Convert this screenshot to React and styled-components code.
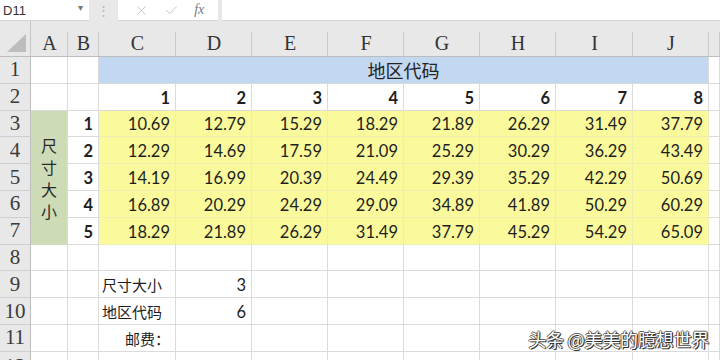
import React from "react";
import styled, { createGlobalStyle } from "styled-components";
import { X, Check } from "lucide-react";

const GlobalStyle = createGlobalStyle`
  * { box-sizing: border-box; }
  html, body { margin: 0; padding: 0; background: #fff; overflow: hidden; }
`;

const columns = ["A", "B", "C", "D", "E", "F", "G", "H", "I", "J", ""];
const regionCodes = [1, 2, 3, 4, 5, 6, 7, 8];
const prices = [
  ["10.69", "12.79", "15.29", "18.29", "21.89", "26.29", "31.49", "37.79"],
  ["12.29", "14.69", "17.59", "21.09", "25.29", "30.29", "36.29", "43.49"],
  ["14.19", "16.99", "20.39", "24.49", "29.39", "35.29", "42.29", "50.69"],
  ["16.89", "20.29", "24.29", "29.09", "34.89", "41.89", "50.29", "60.29"],
  ["18.29", "21.89", "26.29", "31.49", "37.79", "45.29", "54.29", "65.09"],
];

function App() {
  return (
    <Page>
      <GlobalStyle />
      <FormulaBar>
        <NameBox>
          D11
          <Caret>▾</Caret>
        </NameBox>
        <Grip>⋮</Grip>
        <FxBox>
          <X size={15} strokeWidth={1.4} />
          <Check size={15} strokeWidth={1.4} />
          <FxLabel>fx</FxLabel>
        </FxBox>
        <FormulaInput />
      </FormulaBar>

      <Sheet>
        <Corner>
          <CornerTriangle />
        </Corner>
        {columns.map((c, i) => (
          <ColHeader key={i}>{c}</ColHeader>
        ))}

        {/* row 1 */}
        <RowHeader>1</RowHeader>
        <Cell />
        <Cell />
        <Title>地区代码</Title>
        <Cell />

        {/* row 2 */}
        <RowHeader>2</RowHeader>
        <Cell />
        <Cell />
        {regionCodes.map((n) => (
          <Cell key={n} $bold>
            {n}
          </Cell>
        ))}
        <Cell />

        {/* rows 3-7 */}
        {prices.map((row, r) => (
          <React.Fragment key={r}>
            <RowHeader>{r + 3}</RowHeader>
            {r === 0 && (
              <SizeLabel>
                <Stacked>尺寸大小</Stacked>
              </SizeLabel>
            )}
            <Cell $bold>{r + 1}</Cell>
            {row.map((v, i) => (
              <Cell key={i} $fill="#fafa9c" $line="#ededb4">
                {v}
              </Cell>
            ))}
            <Cell />
          </React.Fragment>
        ))}

        {/* row 8 */}
        <RowHeader>8</RowHeader>
        {columns.map((_, i) => (
          <Cell key={i} />
        ))}

        {/* row 9 */}
        <RowHeader>9</RowHeader>
        <Cell />
        <Cell />
        <Cell $align="flex-start" $cjk>尺寸大小</Cell>
        <Cell>3</Cell>
        {columns.slice(4).map((_, i) => (
          <Cell key={i} />
        ))}

        {/* row 10 */}
        <RowHeader>10</RowHeader>
        <Cell />
        <Cell />
        <Cell $align="flex-start" $cjk>地区代码</Cell>
        <Cell>6</Cell>
        {columns.slice(4).map((_, i) => (
          <Cell key={i} />
        ))}

        {/* row 11 */}
        <RowHeader>11</RowHeader>
        <Cell />
        <Cell />
        <Cell $cjk>邮费：</Cell>
        {columns.slice(3).map((_, i) => (
          <Cell key={i} />
        ))}

        {/* row 12, only its top shows */}
        <RowHeader $tall>12</RowHeader>
        {columns.map((_, i) => (
          <Cell key={i} />
        ))}
      </Sheet>

      <Watermark>头条 @美美的臆想世界</Watermark>
    </Page>
  );
}

const Page = styled.div`
  position: relative;
  width: 720px;
  height: 360px;
  overflow: hidden;
  background: #fff;
`;

const FormulaBar = styled.div`
  display: flex;
  height: 21px;
  background: #e8e8e8;
  font-family: "Liberation Sans", Arial, sans-serif;
`;

const NameBox = styled.div`
  width: 89px;
  background: #fff;
  border-bottom: 1px solid #d6d6d6;
  display: flex;
  align-items: center;
  justify-content: space-between;
  padding: 0 6px 0 3px;
  font-size: 13px;
  color: #333;
`;

const Caret = styled.span`
  font-size: 10px;
  color: #777;
  margin-top: -6px;
`;

const Grip = styled.div`
  width: 29px;
  display: flex;
  align-items: center;
  justify-content: center;
  color: #b5b5b5;
  font-size: 13px;
`;

const FxBox = styled.div`
  width: 100px;
  background: #fff;
  border-bottom: 1px solid #d6d6d6;
  display: flex;
  align-items: center;
  justify-content: space-around;
  padding: 0 6px 0 8px;
  color: #bdbdbd;
`;

const FxLabel = styled.span`
  font-family: "Liberation Serif", serif;
  font-style: italic;
  font-size: 14px;
  color: #7a7a7a;
`;

const FormulaInput = styled.div`
  flex: 1;
  margin-left: 4px;
  background: #fff;
  border-bottom: 1px solid #d6d6d6;
`;

const Sheet = styled.div`
  display: grid;
  grid-template-columns: 31px 37px 31px 77px 76px 76px 76px 76px 76px 77px 76px 11px;
  grid-template-rows: 36px repeat(12, 26.8px);
  background: #fff;
`;

const Corner = styled.div`
  background: #e8e8e8;
  border-bottom: 1px solid #bdbdbd;
  border-right: 1px solid #c6c6c6;
  position: relative;
`;

const CornerTriangle = styled.div`
  position: absolute;
  right: 4px;
  bottom: 4px;
  width: 0;
  height: 0;
  border-left: 19px solid transparent;
  border-bottom: 18px solid #bdbdbd;
`;

const ColHeader = styled.div`
  position: relative;
  background: #e8e8e8;
  border-bottom: 1px solid #bdbdbd;
  display: flex;
  align-items: flex-end;
  justify-content: center;
  padding-bottom: 1px;
  font-family: "Liberation Serif", "Times New Roman", serif;
  font-size: 20px;
  color: #333;
  &::after {
    content: "";
    position: absolute;
    right: 0;
    top: 11px;
    bottom: 0;
    width: 1px;
    background: #c9c9c9;
  }
`;

const RowHeader = styled.div`
  background: #e8e8e8;
  border-right: 1px solid #bdbdbd;
  border-bottom: 1px solid #cfcfcf;
  display: flex;
  align-items: ${(p) => (p.$tall ? "flex-start" : "center")};
  justify-content: center;
  padding-top: ${(p) => (p.$tall ? "2px" : "0")};
  font-family: "Liberation Serif", "Times New Roman", serif;
  font-size: 21px;
  color: #3a3a3a;
`;

const Cell = styled.div`
  display: flex;
  align-items: flex-end;
  justify-content: ${(p) => p.$align || "flex-end"};
  padding: 0 5px 2px 3px;
  line-height: 20px;
  background: ${(p) => p.$fill || "#fff"};
  border-right: 1px solid ${(p) => p.$line || "#dadada"};
  border-bottom: 1px solid ${(p) => p.$line || "#dadada"};
  font-family: ${(p) =>
    p.$cjk
      ? '"Noto Sans CJK SC", sans-serif'
      : 'Lato, "Noto Sans CJK SC", sans-serif'};
  font-size: ${(p) => (p.$cjk ? "15px" : "16.5px")};
  font-weight: ${(p) => (p.$bold ? 700 : 400)};
  color: #1e1e1e;
  white-space: nowrap;
`;

const Title = styled.div`
  grid-column: span 8;
  background: #c2d7f0;
  border-bottom: 1px solid #dadada;
  border-right: 1px solid #dadada;
  display: flex;
  align-items: center;
  justify-content: center;
  font-family: "Noto Sans CJK SC", sans-serif;
  font-size: 18px;
  color: #222;
  padding-top: 1px;
`;

const SizeLabel = styled.div`
  grid-row: span 5;
  background: #cddcb6;
  border-right: 1px solid #dadada;
  display: flex;
  align-items: center;
  justify-content: center;
`;

const Stacked = styled.span`
  width: 1em;
  font-family: "Noto Sans CJK SC", sans-serif;
  font-size: 16px;
  line-height: 22px;
  color: #2a2a2a;
  word-break: break-all;
  text-align: center;
`;

const Watermark = styled.div`
  position: absolute;
  right: 11px;
  bottom: 8px;
  font-family: "Noto Sans CJK SC", sans-serif;
  font-size: 18px;
  color: #fff;
  letter-spacing: -0.2px;
  text-shadow: 1px 1px 0 #333, -1px 0 0 #555, 0 -1px 0 #666, 1px 0 1px #333;
`;

export default App;
